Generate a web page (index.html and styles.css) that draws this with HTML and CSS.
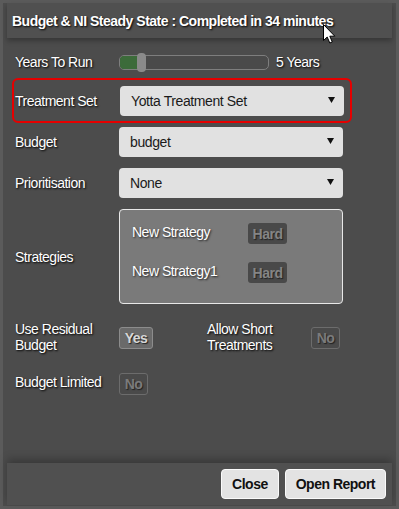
FILE: index.html
```html
<!DOCTYPE html>
<html>
<head>
<meta charset="utf-8">
<link rel="stylesheet" href="styles.css">
</head>
<body>
<div class="dialog">
  <div class="header">Budget &amp; NI Steady State : Completed in 34 minutes</div>
  <div class="content">
    <div class="row years">
      <div class="label">Years To Run</div>
      <div class="slider"><div class="fill"></div><div class="thumb"></div></div>
      <div class="value">5 Years</div>
    </div>
    <div class="row highlight">
      <div class="label">Treatment Set</div>
      <div class="select"><span>Yotta Treatment Set</span><svg width="7" height="6" viewBox="0 0 7 6"><path d="M0 0H7L3.5 6Z" fill="#111"/></svg></div>
    </div>
    <div class="row sel-row first">
      <div class="label">Budget</div>
      <div class="select"><span>budget</span><svg width="7" height="6" viewBox="0 0 7 6"><path d="M0 0H7L3.5 6Z" fill="#111"/></svg></div>
    </div>
    <div class="row sel-row">
      <div class="label">Prioritisation</div>
      <div class="select"><span>None</span><svg width="7" height="6" viewBox="0 0 7 6"><path d="M0 0H7L3.5 6Z" fill="#111"/></svg></div>
    </div>
    <div class="row strategies-row">
      <div class="label">Strategies</div>
      <div class="strategies">
        <div class="strategy"><span class="sname">New Strategy</span><span class="badge">Hard</span></div>
        <div class="strategy"><span class="sname">New Strategy1</span><span class="badge">Hard</span></div>
      </div>
    </div>
    <div class="row toggles">
      <div class="label two">Use Residual<br>Budget</div>
      <div class="toggle on">Yes</div>
      <div class="label two second">Allow Short<br>Treatments</div>
      <div class="toggle">No</div>
    </div>
    <div class="row limited">
      <div class="label">Budget Limited</div>
      <div class="toggle">No</div>
    </div>
  </div>
  <div class="footer">
    <button class="btn">Close</button>
    <button class="btn">Open Report</button>
  </div>
  <svg class="cursor" width="13" height="20" viewBox="0 0 13 20"><path d="M0.5 0.5V16.5L4.2 13L6.8 19L9.3 18L6.8 12.2H11.8Z" fill="#fff" stroke="#000" stroke-width="1"/></svg>
</div>
</body>
</html>
```

FILE: styles.css
```css
* { box-sizing: border-box; }
html, body { margin: 0; padding: 0; }
body {
  width: 399px;
  height: 509px;
  background: #5b5b5b;
  font-family: "Liberation Sans", Arial, sans-serif;
  font-size: 14px;
  color: #fff;
  overflow: hidden;
}
.dialog {
  position: relative;
  width: 399px;
  height: 509px;
  border: 3px solid #5b5b5b;
  background: #4c4c4c;
  display: flex;
  flex-direction: column;
}
.header {
  margin: 0 4px;
  height: 35px;
  background: #505050;
  box-shadow: 0 3px 5px rgba(0,0,0,0.28);
  padding: 10px 0 0 5px;
  font-weight: bold;
  font-size: 14px;
  letter-spacing: -0.5px;
  text-shadow: 1px 1px 2px #000;
  position: relative;
  z-index: 1;
}
.content {
  flex: 1;
  padding: 14px 0 0 12px;
}
.row { display: flex; align-items: center; }
.label {
  width: 104px;
  flex: none;
  letter-spacing: -0.5px;
  text-shadow: 1px 1px 2px #000;
  line-height: 16px;
}
.years { height: 20px; }
.slider {
  position: relative;
  width: 150px;
  height: 15px;
  border: 1px solid #7e7e7e;
  border-radius: 5px;
  background: #4a4a4a;
}
.fill {
  position: absolute;
  left: 0; top: 0; bottom: 0;
  width: 20px;
  background: #3c6b3a;
  border-radius: 4px 0 0 4px;
}
.thumb {
  position: absolute;
  left: 17px; top: -3px;
  width: 9px; height: 19px;
  border-radius: 4px;
  background: #8a8a8a;
}
.value {
  margin-left: 7px;
  letter-spacing: -0.5px;
  text-shadow: 1px 1px 2px #000;
}
.highlight {
  margin: 6px 0 0 -3px;
  width: 340px;
  height: 45px;
  border: 2px solid #e60000;
  border-radius: 6px;
  padding: 0 0 0 1px;
}
.highlight .label { width: 105px; }
.select {
  width: 224px;
  height: 30px;
  background: #e1e1e1;
  border-radius: 4px;
  display: flex;
  align-items: center;
  justify-content: space-between;
  padding: 0 9px 0 11px;
  color: #1a1a1a;
  letter-spacing: -0.4px;
}
.select svg { display: block; margin-top: -2px; }
.sel-row { margin-top: 11px; }
.sel-row.first { margin-top: 4px; }
.strategies-row { margin-top: 11px; }
.strategies {
  width: 224px;
  height: 95px;
  border: 1px solid #e8e8e8;
  border-radius: 4px;
  background: #7a7a7a;
  padding: 13px 0 0 12px;
  display: flex;
  flex-direction: column;
  gap: 18px;
}
.strategy { display: flex; align-items: center; height: 21px; }
.sname {
  width: 116px;
  letter-spacing: -0.5px;
  text-shadow: 1px 1px 2px #222;
  margin-top: -4px;
}
.badge {
  width: 39px;
  height: 21px;
  border-radius: 3px;
  background: #494949;
  color: #858585;
  font-weight: bold;
  text-align: center;
  line-height: 22px;
  letter-spacing: -0.5px;
  text-shadow: 1px 1px 1px #222;
}
.toggles { margin-top: 17px; align-items: flex-start; }
.toggle {
  height: 22px;
  width: 29px;
  border: 1px solid #6c6c6c;
  border-radius: 3px;
  background: #4a4a4a;
  color: #7b7b7b;
  font-weight: bold;
  text-align: center;
  line-height: 21px;
  letter-spacing: -0.5px;
  text-shadow: 1px 1px 1px #222;
  margin-top: 6px;
}
.toggle.on {
  background: #6a6a6a;
  border-color: #8c8c8c;
  color: #d6d6d6;
  width: 34px;
}
.toggles .label.second { margin-left: 54px; }
.limited { margin-top: 20px; }
.limited .label { margin-top: -4px; }
.limited .toggle { margin-top: 0; }
.footer {
  margin: 0 4px 1px 4px;
  height: 42px;
  background: #505050;
  box-shadow: 0 -4px 8px rgba(0,0,0,0.25);
  display: flex;
  justify-content: flex-end;
  align-items: center;
  gap: 6px;
  padding: 0 6px 0 0;
}
.btn {
  font-family: "Liberation Sans", Arial, sans-serif;
  font-size: 14px;
  font-weight: bold;
  letter-spacing: -0.5px;
  color: #111;
  background: #e3e3e3;
  border: 1px solid #fafafa;
  border-radius: 4px;
  height: 30px;
  padding: 0 10px;
}
.cursor {
  position: absolute;
  left: 320px;
  top: 21px;
  z-index: 5;
}
```
